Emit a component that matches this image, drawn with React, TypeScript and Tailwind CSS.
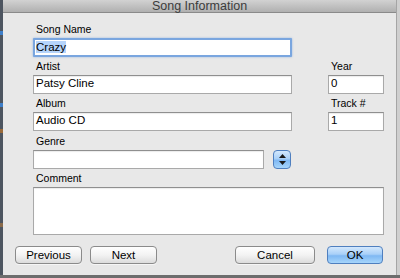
import React from 'react';

const field = 'h-[19px] bg-white border border-[#a9a9a9] border-t-[#8f8f8f] px-[2px] text-[11.5px] leading-[14px] text-black shadow-[inset_0_1px_1px_rgba(0,0,0,0.08)]';
const label = 'h-[12px] text-[10.5px] leading-[12px] text-black pl-[3px]';
const grayButton =
  'h-[18px] rounded-[4px] border border-[#8b8b8b] bg-gradient-to-b from-[#ffffff] via-[#f3f3f3] to-[#dcdcdc] text-[11.5px] leading-[16px] text-black text-center shadow-[0_1px_0_rgba(255,255,255,0.6)]';
const blueButton =
  'rounded-[4px] border border-[#4f7fbf] bg-[linear-gradient(to_bottom,#d3e8fd_0%,#a9d0f8_45%,#7fb8f3_55%,#a6d5fb_100%)]';

export default function App() {
  return (
    <div className="w-[400px] h-[278px] flex flex-col bg-[#6d6d6d] overflow-hidden font-['Liberation_Sans',Arial,sans-serif]">
      <div className="flex h-[275px]">
        {/* desktop peeking through on the left */}
        <div className="w-[3px] flex flex-col bg-[#4d5560]">
          <div className="h-[31px]" />
          <div className="h-[4px] bg-[#3f7fc9]" />
          <div className="h-[68px]" />
          <div className="h-[4px] bg-[#3f7fc9]" />
          <div className="h-[22px]" />
          <div className="h-[4px] bg-[#9a6a3a]" />
          <div className="h-[90px]" />
          <div className="h-[4px] bg-[#8a6a4a]" />
        </div>

        {/* window */}
        <div className="w-[394px] flex flex-col bg-[#e8e8e8] border-r border-[#a5a5a5]">
          <div className="h-[13px] bg-gradient-to-b from-[#d2d2d2] to-[#b0b0b0] border-b border-[#8a8a8a] text-center text-[12.5px] leading-[12px] text-[#3c3c3c]">
            Song Information
          </div>

          <div className="flex flex-col pt-[10px] pl-[30px]">
            {/* Song Name */}
            <div className={label}>Song Name</div>
            <div className="mt-[3px] w-[259px] h-[19px] bg-white border-2 border-[#7aa6df] rounded-[1px] px-[1px] text-[11.5px] leading-[14px] text-black shadow-[0_0_2px_rgba(80,140,220,0.6)]">
              <span className="bg-[#b5d4fb]">Crazy</span>
            </div>

            {/* Artist / Year */}
            <div className="mt-[3px] flex gap-[36px]">
              <div className="flex flex-col w-[259px]">
                <div className={label}>Artist</div>
                <div className={`mt-[3px] ${field}`}>Patsy Cline</div>
              </div>
              <div className="flex flex-col w-[56px]">
                <div className={label}>Year</div>
                <div className={`mt-[3px] ${field}`}>0</div>
              </div>
            </div>

            {/* Album / Track */}
            <div className="mt-[3px] flex gap-[36px]">
              <div className="flex flex-col w-[259px]">
                <div className={label}>Album</div>
                <div className={`mt-[3px] ${field}`}>Audio CD</div>
              </div>
              <div className="flex flex-col w-[56px]">
                <div className={label}>Track #</div>
                <div className={`mt-[3px] ${field}`}>1</div>
              </div>
            </div>

            {/* Genre */}
            <div className={`mt-[4px] ${label}`}>Genre</div>
            <div className="mt-[3px] flex items-start gap-[9px]">
              <div className={`w-[231px] ${field}`} />
              <div className={`w-[18px] h-[19px] flex flex-col items-center justify-center gap-[3px] ${blueButton}`}>
                <svg width="7" height="4" viewBox="0 0 7 4"><path d="M3.5 0 L7 4 L0 4 Z" fill="#1a1a1a" /></svg>
                <svg width="7" height="4" viewBox="0 0 7 4"><path d="M0 0 L7 0 L3.5 4 Z" fill="#1a1a1a" /></svg>
              </div>
            </div>

            {/* Comment */}
            <div className={`mt-[3px] ${label}`}>Comment</div>
            <div className={`mt-[3px] w-[351px] h-[48px] ${field}`} />
          </div>

          {/* buttons */}
          <div className="mt-[11px] flex pl-[12px] pr-[13px]">
            <div className={`w-[67px] ${grayButton}`}>Previous</div>
            <div className={`ml-[8px] w-[67px] ${grayButton}`}>Next</div>
            <div className="flex-1" />
            <div className={`w-[80px] ${grayButton}`}>Cancel</div>
            <div className={`ml-[12px] w-[56px] h-[18px] text-[11.5px] leading-[16px] text-black text-center ${blueButton}`}>OK</div>
          </div>
        </div>

        <div className="flex-1 bg-[#cfcfcf]" />
      </div>
    </div>
  );
}
